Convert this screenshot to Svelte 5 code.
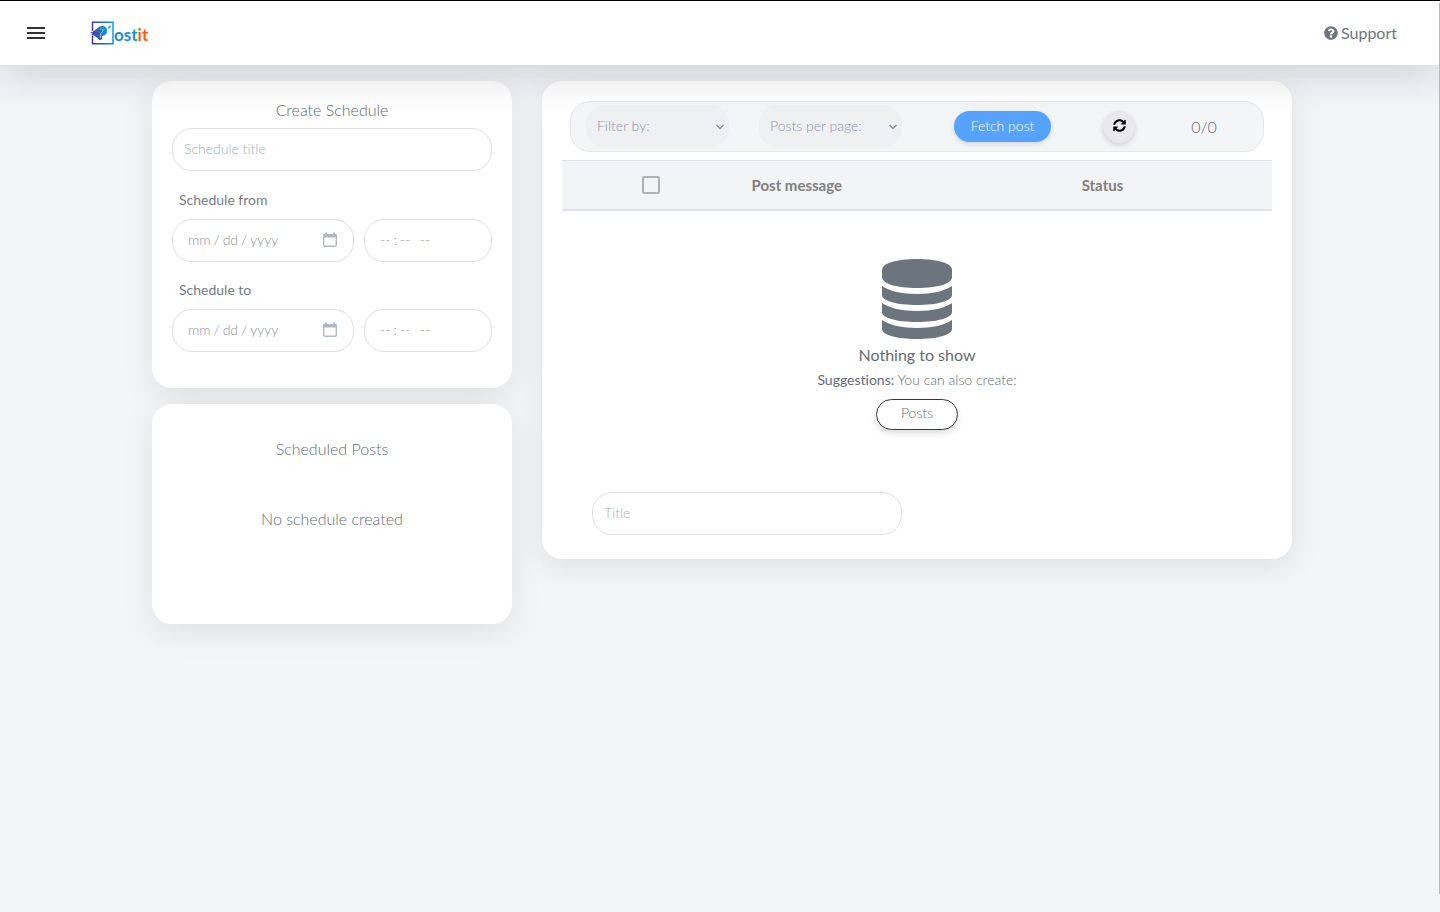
<script>
  const ranges = [
    { id: 'from', label: 'Schedule from' },
    { id: 'to', label: 'Schedule to' }
  ];
</script>

<header>
  <div class="brand">
    <button class="menu" aria-label="Menu"><span></span><span></span><span></span></button>
    <a class="logo" href="#home" aria-label="Postit">
      <svg width="60" height="26" viewBox="0 0 60 26">
        <defs>
          <linearGradient id="frame" x1="0" x2="1" y1="0.6" y2="0.4">
            <stop offset="0" stop-color="#4a35a0" />
            <stop offset="0.5" stop-color="#3560b5" />
            <stop offset="1" stop-color="#0a9fe0" />
          </linearGradient>
          <linearGradient id="word" x1="0" x2="1" y1="0" y2="0">
            <stop offset="0" stop-color="#1a86cc" />
            <stop offset="1" stop-color="#0a9fe0" />
          </linearGradient>
        </defs>
        <path d="M2.500 11V2.300H23V23.700H2.500V15.500" fill="none" stroke="url(#frame)" stroke-width="1.500" />
        <path d="M0 13 3.500 11.200 7.500 8.200C9 6.500 11 6 12.700 6C15.700 6 17.200 8.200 17.200 10.800C17.200 14.400 14.600 16 12 15.800V18.600C12 19.600 11 20.200 9.700 20.200L6.500 17.300 3 15 0.800 14.300 3 13.500Z" fill="url(#frame)" />
        <path d="M10.200 9.300C12.300 8 13.600 9.600 12.800 11.600L10.600 13.200V18" fill="none" stroke="#c5e2f5" stroke-width="0.700" />
        <path d="M17.500 8.400C17.800 6.500 19.200 6 21 5.400C20.900 7.200 19.800 9 17.500 8.400Z" fill="#5a8fd0" />
        <text class="word" x="24" y="21" fill="url(#word)">ost<tspan fill="#ff5a0a">it</tspan></text>
      </svg>
    </a>
  </div>
  <a class="support" href="#support">
    <svg width="14" height="14" viewBox="0 0 512 512"><path fill="currentColor" d="M504 256c0 137-111 248-248 248S8 393 8 256C8 119.100 119 8 256 8s248 111.100 248 248zM262.700 90c-54.500 0-89.300 23-116.500 63.800-3.500 5.300-2.400 12.400 2.700 16.300l34.700 26.300c5.200 3.900 12.600 3 16.700-2.100 17.900-22.700 30.100-35.800 57.300-35.800 20.400 0 45.700 13.100 45.700 33 0 15-12.400 22.700-32.500 34C247.100 238.500 216 254.900 216 296v4c0 6.600 5.400 12 12 12h56c6.600 0 12-5.400 12-12v-1.300c0-28.500 83.200-29.600 83.200-106.700 0-58-60.200-102-116.500-102zM256 338c-25.400 0-46 20.600-46 46s20.600 46 46 46 46-20.600 46-46-20.600-46-46-46z" /></svg>
    Support
  </a>
</header>

<main>
  <div class="layout">
    <div class="side">
      <section class="card create">
        <h2>Create Schedule</h2>
        <input class="field name" type="text" placeholder="Schedule title" aria-label="Schedule title" />
        {#each ranges as range}
          <label class="range-label" for={`${range.id}-date`}>{range.label}</label>
          <div class="range">
            <input class="field date" id={`${range.id}-date`} type="date" />
            <input class="field time" type="time" aria-label={`${range.label} time`} />
          </div>
        {/each}
      </section>
      <section class="card scheduled">
        <h2>Scheduled Posts</h2>
        <p>No schedule created</p>
      </section>
    </div>

    <section class="card posts">
      <div class="filters">
        <select class="field" aria-label="Filter by"><option>Filter by:</option></select>
        <select class="field" aria-label="Posts per page"><option>Posts per page:</option></select>
        <button class="fetch">Fetch post</button>
        <button class="refresh" aria-label="Refresh">
          <svg width="13" height="13" viewBox="0 0 512 512"><path d="M370.700 133.300C339.500 104 298.900 88 255.800 88c-77.500.1-144.300 53.200-162.800 126.900-1.300 5.400-6.100 9.200-11.700 9.200H24.100c-7.500 0-13.200-6.800-11.800-14.200C33.900 94.900 134.800 8 256 8c66.400 0 126.800 26.100 171.300 68.700L463 41c15.100-15.100 41-4.400 41 17v134c0 13.300-10.700 24-24 24H346c-21.400 0-32.100-25.900-17-41l41.700-41.700zM32 296h134c21.400 0 32.100 25.900 17 41l-41.800 41.800c31.300 29.300 71.800 45.300 114.900 45.300 77.400-.1 144.300-53.100 162.800-126.800 1.300-5.400 6.100-9.200 11.700-9.200h57.300c7.500 0 13.200 6.800 11.800 14.200C478.100 417.100 377.200 504 256 504c-66.400 0-126.800-26.100-171.300-68.700L49 471c-15.100 15.100-41 4.400-41-17V320c0-13.300 10.700-24 24-24z" /></svg>
        </button>
        <span class="count">0/0</span>
      </div>
      <table>
        <thead>
          <tr>
            <th class="pick"><input type="checkbox" aria-label="Select all posts" /></th>
            <th class="message">Post message</th>
            <th>Status</th>
          </tr>
        </thead>
      </table>
      <div class="empty">
        <svg width="70" height="80" viewBox="0 0 70 80" fill="#6c757d">
          <path d="M0 11C0 4 15 0 35 0S70 4 70 11V18C70 25 55 29 35 29S0 25 0 18Z" />
          <path d="M0 27C7 32 20 35 35 35S63 32 70 27V36C70 42 55 46 35 46S0 42 0 36Z" />
          <path d="M0 44C7 49 20 52 35 52S63 49 70 44V53C70 59 55 63 35 63S0 59 0 53Z" />
          <path d="M0 61C7 66 20 69 35 69S63 66 70 61V70C70 76 55 80 35 80S0 76 0 70Z" />
        </svg>
        <h3>Nothing to show</h3>
        <p><b>Suggestions:</b> You can also create:</p>
        <button>Posts</button>
      </div>
      <input class="field title" type="text" placeholder="Title" aria-label="Title" />
    </section>
  </div>
</main>
<div class="scroll-edge" aria-hidden="true"></div>

<style>
  :global(body) {
    min-height: 100vh;
    background: #f4f5f7;
    color: #626b73;
    font: 300 14px/20px Lato, sans-serif;
    font-variant-ligatures: none;
  }
  * { box-sizing: border-box; }
  h2, h3, p { margin: 0; }
  button, input, select {
    font: inherit;
    font-variant-ligatures: none;
    color: inherit;
  }
  button { cursor: pointer; }
  header {
    position: relative;
    z-index: 1;
    display: flex;
    align-items: center;
    justify-content: space-between;
    height: 65px;
    padding: 0 43px 0 27px;
    border-top: 1px solid #000;
    background: #fff;
    box-shadow: 0 10px 40px rgba(25, 25, 40, 0.16);
  }
  .brand { display: flex; align-items: center; gap: 45px; }
  .menu {
    display: grid;
    gap: 3px;
    width: 18px;
    padding: 0;
    border: 0;
    background: none;
  }
  .menu span { height: 2px; background: #33313b; }
  .logo { display: flex; }
  .word {
    font: 700 17px Lato, sans-serif;
    font-variant-ligatures: none;
  }
  .support {
    display: flex;
    align-items: center;
    gap: 3px;
    color: #6c757d;
    font-size: 16px;
    font-weight: 400;
    text-decoration: none;
  }
  main { padding: 16px 0 48px 4px; }
  .layout {
    display: grid;
    grid-template-columns: 360fr 750fr;
    align-items: start;
    gap: 30px;
    max-width: 1140px;
    margin: 0 auto;
  }
  .side { display: grid; gap: 16px; }
  .card {
    padding: 20px;
    border-radius: 20px;
    background: #fff;
    box-shadow: 0 8px 32px rgba(0, 0, 0, 0.09);
  }
  h2, h3, .scheduled p {
    font-size: 16px;
    font-weight: 300;
    line-height: 18px;
    text-align: center;
  }
  .field {
    display: block;
    width: 100%;
    min-width: 0;
    height: 43px;
    padding: 0 11px 2px;
    border: 1px solid #dee0e6;
    border-radius: 20px;
    background-color: #fff;
    outline: 0;
  }
  .field::placeholder { color: #a7afbb; opacity: 1; }
  .create { padding-bottom: 18px; }
  .create h2 { margin-bottom: 9px; }
  .name { margin-bottom: 19px; }
  .range-label {
    display: block;
    margin: 0 7px 9px;
    color: #747d85;
    font-weight: 400;
  }
  .range {
    display: grid;
    grid-template-columns: 182fr 128fr;
    gap: 10px;
    margin-bottom: 18px;
  }
  .date, .time { padding: 0 15px 2px 14px; color: #8a94a4; }
  .date::-webkit-datetime-edit-text { padding: 0 2px; }
  .date::-webkit-calendar-picker-indicator {
    width: 16px;
    height: 16px;
    padding: 0;
    background: url("data:image/svg+xml,%3Csvg xmlns='http://www.w3.org/2000/svg' viewBox='0 0 16 16'%3E%3Cpath d='M1.700 3V13Q1.700 14.300 3 14.300H13Q14.300 14.300 14.300 13V3' fill='none' stroke='%23b0b8c4' stroke-width='1.400'/%3E%3Cpath d='M1 5.500V3Q1 2 2 2H3V.5H5V2H11V.5H13V2H14Q15 2 15 3V5.500Z' fill='%23b0b8c4'/%3E%3C/svg%3E") center / contain no-repeat;
  }
  .time::-webkit-calendar-picker-indicator { display: none; }
  .time::-webkit-datetime-edit-text { padding: 0 2px; }
  .scheduled { min-height: 220px; padding-top: 36px; }
  .scheduled p { margin-top: 52px; }
  .posts { padding-bottom: 24px; }
  .filters {
    display: grid;
    grid-template-columns: 173fr 173fr 141fr 92fr 78fr;
    align-items: center;
    height: 51px;
    margin: 0 8px 8px;
    padding: 0 20px 0 15px;
    border: 1px solid #e6e7ea;
    border-radius: 20px;
    background: #f4f5f7;
  }
  .filters > :not(select) { justify-self: center; }
  select.field {
    width: 143px;
    border: 0;
    color: #8a94a8;
    appearance: none;
    background: #eff0f2 url("data:image/svg+xml,%3Csvg xmlns='http://www.w3.org/2000/svg' viewBox='0 0 10 10'%3E%3Cpath d='M1.500 3 5 6.500 8.500 3' fill='none' stroke='%238490a4' stroke-width='1.500'/%3E%3C/svg%3E") right 4px center / 10px no-repeat;
  }
  .fetch {
    height: 31px;
    padding: 0 17px 2px;
    border: 0;
    border-radius: 16px;
    background: #55a3ff;
    color: #fff;
    box-shadow: 0 2px 5px rgba(0, 0, 0, 0.12);
  }
  .refresh {
    display: grid;
    place-items: center;
    width: 32px;
    height: 32px;
    padding: 0 0 2px;
    border: 0;
    border-radius: 50%;
    background: #e9e8ed;
    box-shadow: 0 2px 5px rgba(0, 0, 0, 0.16);
  }
  .count { font-size: 16px; }
  table { width: 100%; border-collapse: collapse; table-layout: fixed; }
  th {
    height: 49px;
    padding: 0 12px;
    border-top: 1px solid #dee2e6;
    border-bottom: 2px solid #dee2e6;
    background: #f3f4f6;
    color: #808080;
    font-size: 15px;
    font-weight: 700;
    text-align: left;
  }
  .pick { width: 25%; text-align: center; }
  .message { width: 46.5%; }
  th input {
    appearance: none;
    display: block;
    width: 18px;
    height: 18px;
    margin: 0 auto;
    border: 2px solid #b2b2b2;
    border-radius: 2px;
  }
  .empty {
    display: flex;
    flex-direction: column;
    align-items: center;
    padding: 48px 0 62px;
  }
  .empty h3 { margin: 7px 0 6px; font-weight: 400; }
  .empty b { font-weight: 400; }
  .empty button {
    height: 31px;
    margin-top: 9px;
    padding: 0 24px 2px;
    border: 1px solid #343a40;
    border-radius: 16px;
    background: #fff;
    box-shadow: 0 3px 6px rgba(0, 0, 0, 0.14);
  }
  .title { width: 310px; margin-left: 30px; }
  .scroll-edge {
    position: fixed;
    z-index: 2;
    top: 3px;
    right: 0;
    bottom: 18px;
    width: 1px;
    background: #b8b8b8;
  }
</style>
